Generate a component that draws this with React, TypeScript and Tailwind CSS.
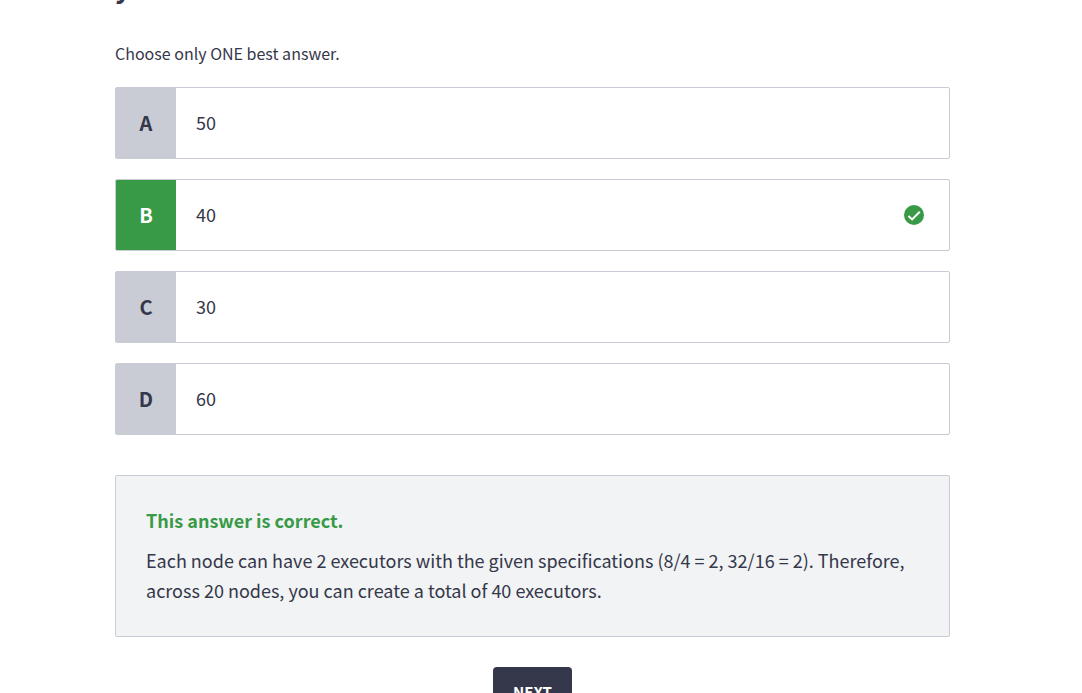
import { useState } from "react";

const options = [
  { letter: "A", text: "50" },
  { letter: "B", text: "40" },
  { letter: "C", text: "30" },
  { letter: "D", text: "60" },
];

const correctLetter = "B";

function CheckBadge() {
  return (
    <svg viewBox="0 0 20 20" className="size-5 shrink-0" role="img" aria-label="Correct">
      <circle cx="10" cy="10" r="10" fill="#389947" />
      <path
        d="M4.4 11 8.1 14.4 15.8 6.7"
        fill="none"
        stroke="#fff"
        strokeWidth="2"
      />
    </svg>
  );
}

export default function App() {
  const [selected, setSelected] = useState("B");

  return (
    <div className="h-screen overflow-hidden bg-white font-['Noto_Sans_CJK_SC','Noto_Sans',sans-serif] text-[#35374a]">
      <main className="flex flex-col pr-[132px] pl-[115px]">
        <h1 className="-mt-[34px] text-[28px] leading-10 font-bold">y</h1>

        <p className="mt-[33px] text-base leading-7">Choose only ONE best answer.</p>

        <div className="mt-5 flex flex-col gap-5">
          {options.map(({ letter, text }) => {
            const correct = letter === selected && letter === correctLetter;
            return (
              <button
                key={letter}
                type="button"
                aria-pressed={letter === selected}
                onClick={() => setSelected(letter)}
                className="flex h-18 items-stretch overflow-hidden rounded-xs border border-[#c9cbd5] bg-white text-left"
              >
                <span
                  className={
                    correct
                      ? "flex w-15 shrink-0 items-center justify-center bg-[#389947] text-xl font-bold text-white"
                      : "flex w-15 shrink-0 items-center justify-center bg-[#c9cbd5] text-xl font-bold"
                  }
                >
                  {letter}
                </span>
                <span className="flex grow items-center justify-between pr-[25px] pl-5 text-lg">
                  <span className="pb-0.5">{text}</span>
                  {correct && <CheckBadge />}
                </span>
              </button>
            );
          })}
        </div>

        <section className="mt-10 rounded-xs border border-[#c9cbd5] bg-[#f1f3f4] px-[30px] pt-[29px] pb-[31px] text-lg leading-[30px]">
          <h2 className="font-bold text-[#389947]">This answer is correct.</h2>
          <p className="mt-[10px]">
            Each node can have 2 executors with the given specifications (8/4 = 2, 32/16 = 2).
            Therefore, across 20 nodes, you can create a total of 40 executors.
          </p>
        </section>

        <button
          type="button"
          className="mt-[30px] h-[50px] self-center rounded-sm bg-[#35374a] px-5 text-[15px] font-bold text-white"
        >
          NEXT
        </button>
      </main>
    </div>
  );
}
